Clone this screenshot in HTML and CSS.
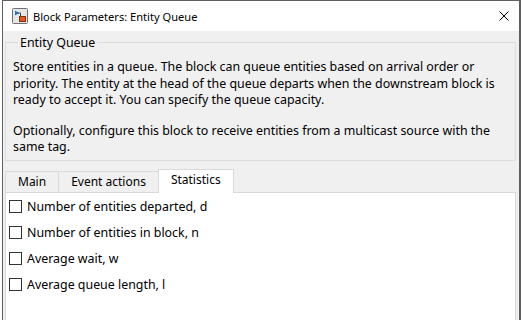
FILE: index.html
```html
<!DOCTYPE html>
<html lang="en">
<head>
    <meta charset="UTF-8">
    <title>Block Parameters: Entity Queue</title>
    <link rel="stylesheet" href="styles.css">
</head>
<body>
    <div class="window">
        <div class="titlebar">
            <svg class="app-icon" width="16" height="16" viewBox="0 0 16 16">
                <rect x="0.5" y="0.5" width="15" height="15" rx="1" fill="#e6e6e6" stroke="#707070"/>
                <path d="M3 2.5 L7 5 L3 7.5 Z" fill="#1f7ad6"/>
                <path d="M5 5 H8.5 V10" fill="none" stroke="#404040" stroke-width="1"/>
                <rect x="7.5" y="8.5" width="6" height="5" fill="#e2571e" stroke="#8a2e0a"/>
            </svg>
            <span class="title">Block Parameters: Entity Queue</span>
            <svg class="close" width="10" height="10" viewBox="0 0 10 10">
                <path d="M0.5 0.5 L9.5 9.5 M9.5 0.5 L0.5 9.5" stroke="#000" stroke-width="1"/>
            </svg>
        </div>
        <div class="content">
            <fieldset class="group">
                <legend>Entity Queue</legend>
                <p>Store entities in a queue. The block can queue entities based on arrival order or priority. The entity at the head of the queue departs when the downstream block is ready to accept it. You can specify the queue capacity.</p>
                <p>Optionally, configure this block to receive entities from a multicast source with the same tag.</p>
            </fieldset>
            <div class="tabs">
                <div class="tab">Main</div>
                <div class="tab">Event actions</div>
                <div class="tab active">Statistics</div>
            </div>
            <div class="panel">
                <label class="check"><span class="box"></span>Number of entities departed, d</label>
                <label class="check"><span class="box"></span>Number of entities in block, n</label>
                <label class="check"><span class="box"></span>Average wait, w</label>
                <label class="check"><span class="box"></span>Average queue length, l</label>
            </div>
        </div>
    </div>
</body>
</html>
```

FILE: styles.css
```css
body {
    margin: 0;
    background: #ffffff;
    font-family: 'Noto Sans', sans-serif;
    font-size: 12.4px;
    color: #000;
}
.window {
    margin-left: 2px;
    width: 516px;
    height: 320px;
    border: 1px solid #5f5f5f;
    border-bottom: none;
    border-right-width: 2px;
    background: #f0f0f0;
    overflow: hidden;
}
.titlebar {
    height: 30px;
    background: #fff;
    display: flex;
    align-items: center;
    padding-left: 9px;
    padding-right: 10px;
}
.app-icon {
    margin-right: 5px;
}
.title {
    flex: 1;
    font-size: 11.1px;
}
.content {
    padding: 0 3px 0 2px;
}
.group {
    margin: 3px 0 0 0;
    padding: 8px 7px 4px 7px;
    border: 1px solid #dcdcdc;
    min-width: 0;
}
.group legend {
    padding: 0 2px;
    margin-left: 5px;
}
.group p {
    margin: 0;
    line-height: 16.5px;
}
.group p + p {
    margin-top: 14px;
}
.tabs {
    display: flex;
    align-items: flex-end;
    margin-top: 7px;
    height: 24px;
    font-size: 12px;
}
.tab {
    height: 20px;
    line-height: 19px;
    padding: 0 12px;
    border: 1px solid #d9d9d9;
    border-bottom: none;
    border-right: none;
    background: #f0f0f0;
}
.tab.active {
    height: 23px;
    background: #fff;
    border-right: 1px solid #d9d9d9;
    margin-bottom: -1px;
    position: relative;
}
.panel {
    background: #fff;
    border: 1px solid #d9d9d9;
    border-bottom: none;
    height: 140px;
    padding-top: 7px;
    display: flex;
    flex-direction: column;
    gap: 13px;
}
.check {
    display: flex;
    align-items: center;
    height: 13px;
    padding-left: 3px;
}
.box {
    width: 11px;
    height: 11px;
    border: 1px solid #333;
    background: #fff;
    margin-right: 5px;
}
```
